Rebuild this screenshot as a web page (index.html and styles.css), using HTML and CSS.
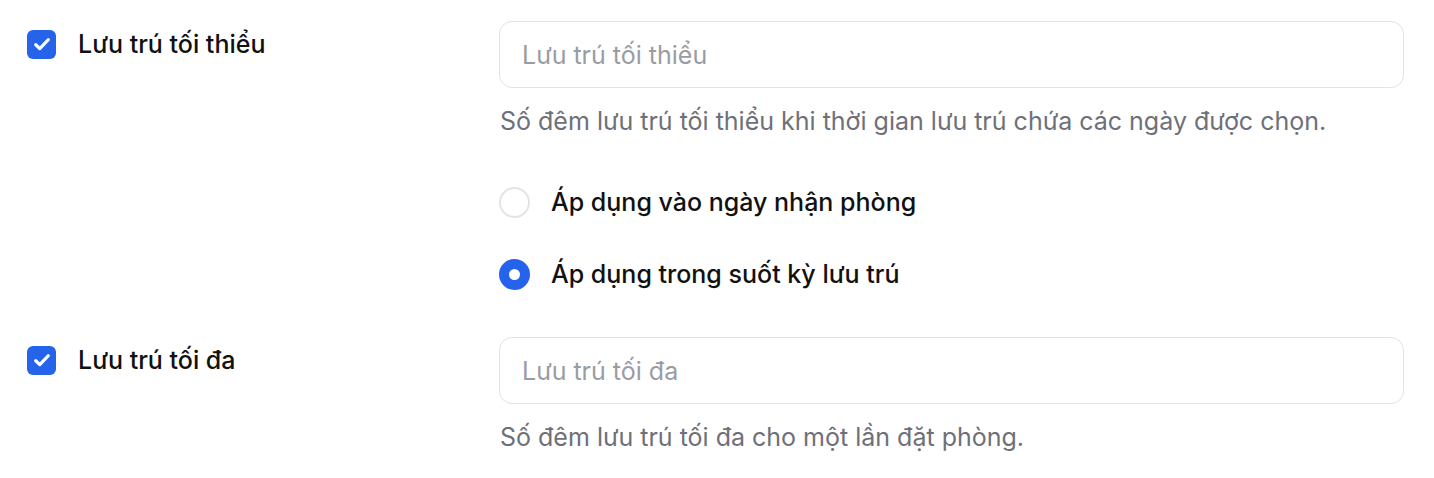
FILE: index.html
```html
<!DOCTYPE html>
<html lang="vi">
<head>
    <meta charset="UTF-8" />
    <meta name="viewport" content="width=device-width, initial-scale=1.0" />
    <title>Lưu trú</title>
    <link rel="stylesheet" href="styles.css">
</head>
<body>
<form class="stay-form">
    <div class="row">
        <label class="toggle">
            <input type="checkbox" checked />
            <span class="box">
                <svg viewBox="0 0 16 16"><path d="M3 8.6l3.2 3.1L13 4.6" fill="none" stroke="#fff" stroke-width="2.6" stroke-linecap="round" stroke-linejoin="round"/></svg>
            </span>
            <span class="toggle-text">Lưu trú tối thiểu</span>
        </label>
        <div class="field">
            <input class="text-input" type="text" placeholder="Lưu trú tối thiểu" />
            <p class="help">Số đêm lưu trú tối thiểu khi thời gian lưu trú chứa các ngày được chọn.</p>
            <div class="radios">
                <label class="radio">
                    <input type="radio" name="apply" />
                    <span class="dot"></span>
                    <span>Áp dụng vào ngày nhận phòng</span>
                </label>
                <label class="radio">
                    <input type="radio" name="apply" checked />
                    <span class="dot"></span>
                    <span>Áp dụng trong suốt kỳ lưu trú</span>
                </label>
            </div>
        </div>
    </div>

    <div class="row">
        <label class="toggle">
            <input type="checkbox" checked />
            <span class="box">
                <svg viewBox="0 0 16 16"><path d="M3 8.6l3.2 3.1L13 4.6" fill="none" stroke="#fff" stroke-width="2.6" stroke-linecap="round" stroke-linejoin="round"/></svg>
            </span>
            <span class="toggle-text">Lưu trú tối đa</span>
        </label>
        <div class="field">
            <input class="text-input" type="text" placeholder="Lưu trú tối đa" />
            <p class="help">Số đêm lưu trú tối đa cho một lần đặt phòng.</p>
        </div>
    </div>
</form>
</body>
</html>
```

FILE: styles.css
```css
body {
    margin: 0;
    background: #fff;
    font-family: Inter, "Noto Sans", sans-serif;
    color: #111;
}

.stay-form {
    display: flex;
    flex-direction: column;
    gap: 43px;
    padding: 21px 30px 0 27px;
}

.row {
    display: grid;
    grid-template-columns: 472px 1fr;
}

/* Checkbox + label on the left */
.toggle {
    display: flex;
    align-items: center;
    gap: 22px;
    align-self: start;
    margin-top: 8px;
    cursor: pointer;
}

.toggle input,
.radio input {
    display: none;
}

.box {
    width: 29px;
    height: 29px;
    border-radius: 6px;
    background: #2563eb;
    display: flex;
    align-items: center;
    justify-content: center;
}

.box svg {
    width: 20px;
    height: 20px;
}

.toggle-text {
    font-size: 25px;
    font-weight: 500;
    line-height: 30px;
}

/* Right column */
.text-input {
    display: block;
    width: 100%;
    height: 67px;
    box-sizing: border-box;
    padding: 0 22px;
    border: 1.5px solid #e3e3e3;
    border-radius: 13px;
    font-family: inherit;
    font-size: 25px;
    color: #111;
    outline: none;
}

.text-input::placeholder {
    color: #9a9ca3;
}

.help {
    margin: 15px 0 0 1px;
    font-size: 25px;
    line-height: 36px;
    color: #6e7079;
}

.radios {
    display: flex;
    flex-direction: column;
    gap: 32px;
    margin-top: 43px;
}

.radio {
    display: flex;
    align-items: center;
    gap: 21px;
    height: 40px;
    font-size: 25px;
    font-weight: 500;
    cursor: pointer;
}

.dot {
    width: 31px;
    height: 31px;
    box-sizing: border-box;
    border-radius: 50%;
    border: 2px solid #e4e4e4;
    display: flex;
    align-items: center;
    justify-content: center;
}

.radio input:checked + .dot {
    background: #2563eb;
    border-color: #2563eb;
}

.radio input:checked + .dot::after {
    content: "";
    width: 11px;
    height: 11px;
    border-radius: 50%;
    background: #fff;
}
```
